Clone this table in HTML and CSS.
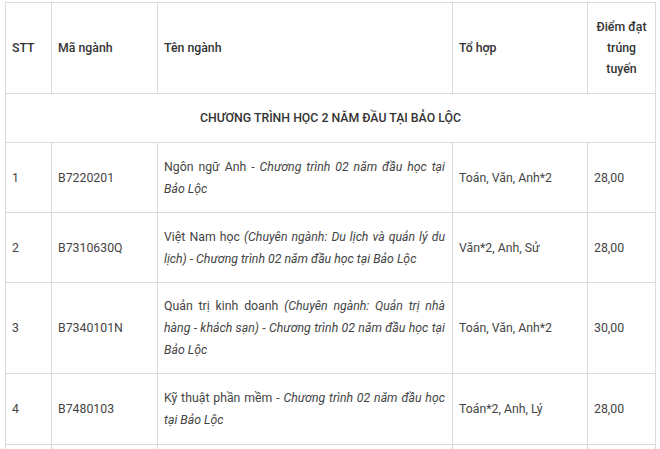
FILE: index.html
```html
<!DOCTYPE html>
<html lang="vi">
<head>
<meta charset="utf-8">
<link rel="stylesheet" href="styles.css">
</head>
<body>
<table class="grid">
  <colgroup>
    <col class="c-stt">
    <col class="c-ma">
    <col class="c-ten">
    <col class="c-to">
    <col class="c-diem">
  </colgroup>
  <thead>
    <tr class="r-head">
      <th>STT</th>
      <th>Mã ngành</th>
      <th>Tên ngành</th>
      <th>Tổ hợp</th>
      <th class="center">Điểm đạt trúng tuyến</th>
    </tr>
  </thead>
  <tbody>
    <tr class="r-section">
      <td colspan="5" class="section">CHƯƠNG TRÌNH HỌC 2 NĂM ĐẦU TẠI BẢO LỘC</td>
    </tr>
    <tr class="r-70">
      <td>1</td>
      <td>B7220201</td>
      <td class="name">Ngôn ngữ Anh - <em>Chương trình 02 năm đầu học tại Bảo Lộc</em></td>
      <td>Toán, Văn, Anh*2</td>
      <td>28,00</td>
    </tr>
    <tr class="r-70">
      <td>2</td>
      <td>B7310630Q</td>
      <td class="name">Việt Nam học <em>(Chuyên ngành: Du lịch và quản lý du lịch) - Chương trình 02 năm đầu học tại Bảo Lộc</em></td>
      <td>Văn*2, Anh, Sử</td>
      <td>28,00</td>
    </tr>
    <tr class="r-91">
      <td>3</td>
      <td>B7340101N</td>
      <td class="name">Quản trị kinh doanh <em>(Chuyên ngành: Quản trị nhà hàng - khách sạn) - Chương trình 02 năm đầu học tại Bảo Lộc</em></td>
      <td>Toán, Văn, Anh*2</td>
      <td>30,00</td>
    </tr>
    <tr class="r-71">
      <td>4</td>
      <td>B7480103</td>
      <td class="name">Kỹ thuật phần mềm - <em>Chương trình 02 năm đầu học tại Bảo Lộc</em></td>
      <td>Toán*2, Anh, Lý</td>
      <td>28,00</td>
    </tr>
    <tr class="r-more">
      <td></td>
      <td></td>
      <td></td>
      <td></td>
      <td></td>
    </tr>
  </tbody>
</table>
</body>
</html>
```
FILE: styles.css
```css
html, body {
  margin: 0;
  padding: 0;
  background: #fff;
}
body {
  padding: 2px 0 0 5px;
  font-family: Roboto, "Liberation Sans", Arial, sans-serif;
  font-size: 12.3px;
  line-height: 22px;
  color: #444;
}
.grid {
  border-collapse: collapse;
  table-layout: fixed;
  width: 651px;
}
.c-stt { width: 46px; }
.c-ma { width: 106px; }
.c-ten { width: 295px; }
.c-to { width: 135px; }
.c-diem { width: 68px; }
.grid th,
.grid td {
  border: 1px solid #dcdcdc;
  padding: 0 6px;
  vertical-align: middle;
  text-align: left;
}
.grid th {
  font-weight: 500;
  color: #333;
  line-height: 21px;
}
.grid th.center { text-align: center; }
.grid td.name { text-align: justify; padding-right: 7px; }
.grid td.section {
  text-align: center;
  font-weight: 500;
  color: #333;
}
.r-head { height: 91px; }
.r-section { height: 49px; }
.r-70 { height: 70px; }
.r-91 { height: 91px; }
.r-71 { height: 71px; }
.r-more { height: 40px; }
```
